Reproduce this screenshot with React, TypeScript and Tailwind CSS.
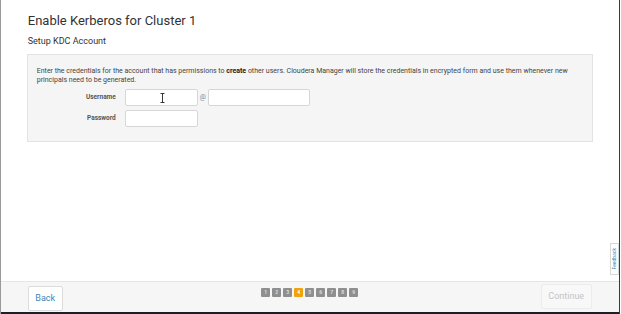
import React from "react";

const steps = [1, 2, 3, 4, 5, 6, 7, 8, 9];

function TextCursor() {
  return (
    <svg width="5" height="10" viewBox="0 0 5 10" className="absolute left-[34px] top-[3px]">
      <path d="M0.5 0.5 H4.5 M2.5 0.5 V9.5 M0.5 9.5 H4.5" stroke="#222" strokeWidth="0.9" fill="none" />
    </svg>
  );
}

export default function App() {
  return (
    <div
      className="relative w-[621px] h-[314px] overflow-hidden bg-white flex"
      style={{ fontFamily: "Roboto, 'Liberation Sans', sans-serif" }}
    >
      <div className="w-[1px] bg-[#9a9a9a]" />
      <div className="flex-1 flex flex-col">
        <div className="flex-1 px-[26px] pt-[13px]">
          <h1 className="text-[13px] leading-[16px] text-[#333] ml-[1px]">Enable Kerberos for Cluster 1</h1>
          <h2 className="text-[9px] leading-[12px] text-[#333] mt-[6px] ml-[1px]">Setup KDC Account</h2>
          <div className="mt-[7px] w-[566px] h-[88px] border border-[#e3e3e3] bg-[#f5f5f5] px-[9px] pt-[12px]">
            <p className="text-[7px] leading-[9px] text-[#444] whitespace-nowrap">
              Enter the credentials for the account that has permissions to{" "}
              <b className="font-bold text-[#222]">create</b> other users. Cloudera Manager will store the credentials in
              encrypted form and use them whenever new
              <br />
              principals need to be generated.
            </p>
            <div className="mt-[4px] flex items-center">
              <span className="w-[79px] text-right text-[6.5px] font-bold text-[#555]">Username</span>
              <div className="relative ml-[9px] w-[73px] h-[17px] bg-white border border-[#d6d6d6] rounded-[2px]">
                <TextCursor />
              </div>
              <span className="mx-[2px] text-[7px] text-[#888]">@</span>
              <div className="w-[102px] h-[17px] bg-white border border-[#d6d6d6] rounded-[2px]" />
            </div>
            <div className="mt-[4px] flex items-center">
              <span className="w-[79px] text-right text-[6.5px] font-bold text-[#555]">Password</span>
              <div className="ml-[9px] w-[73px] h-[17px] bg-white border border-[#d6d6d6] rounded-[2px]" />
            </div>
          </div>
        </div>
        <div className="h-[31px] border-t border-[#e6e6e6] bg-[#f6f6f6] flex items-start pl-[27px] pr-[27px] pt-[2px]">
          <div className="w-[60px]">
            <button className="w-[35px] h-[25px] bg-white border border-[#dcdcdc] rounded-[2px] text-[9px] text-[#3a87b8]">
              Back
            </button>
          </div>
          <div className="flex-1 flex justify-center gap-[2px] pt-[4px]">
            {steps.map((s) => (
              <span
                key={s}
                className={
                  s === 4
                    ? "w-[9px] h-[9px] rounded-[1px] bg-[#f0a30a] text-white text-[5px] leading-[9px] text-center font-bold"
                    : "w-[9px] h-[9px] rounded-[1px] bg-[#8f8f8f] text-[#ddd] text-[5px] leading-[9px] text-center font-bold"
                }
              >
                {s}
              </span>
            ))}
          </div>
          <div className="w-[60px] flex justify-end">
            <button className="w-[51px] h-[25px] bg-[#f8f8f8] border border-[#ececec] rounded-[2px] text-[9px] text-[#c4c4c4]">
              Continue
            </button>
          </div>
        </div>
        <div className="h-[2px] bg-[#1d1f26]" />
      </div>
      <div className="w-[1px] bg-[#3a3a3a]" />
      <div className="w-[2px] bg-white" />
      <div className="absolute right-[2px] top-[243px] w-[9px] h-[32px] bg-white border border-[#d8d8d8] flex items-center justify-center">
        <span className="text-[5px] text-[#3a87b8] -rotate-90 whitespace-nowrap">Feedback</span>
      </div>
    </div>
  );
}
